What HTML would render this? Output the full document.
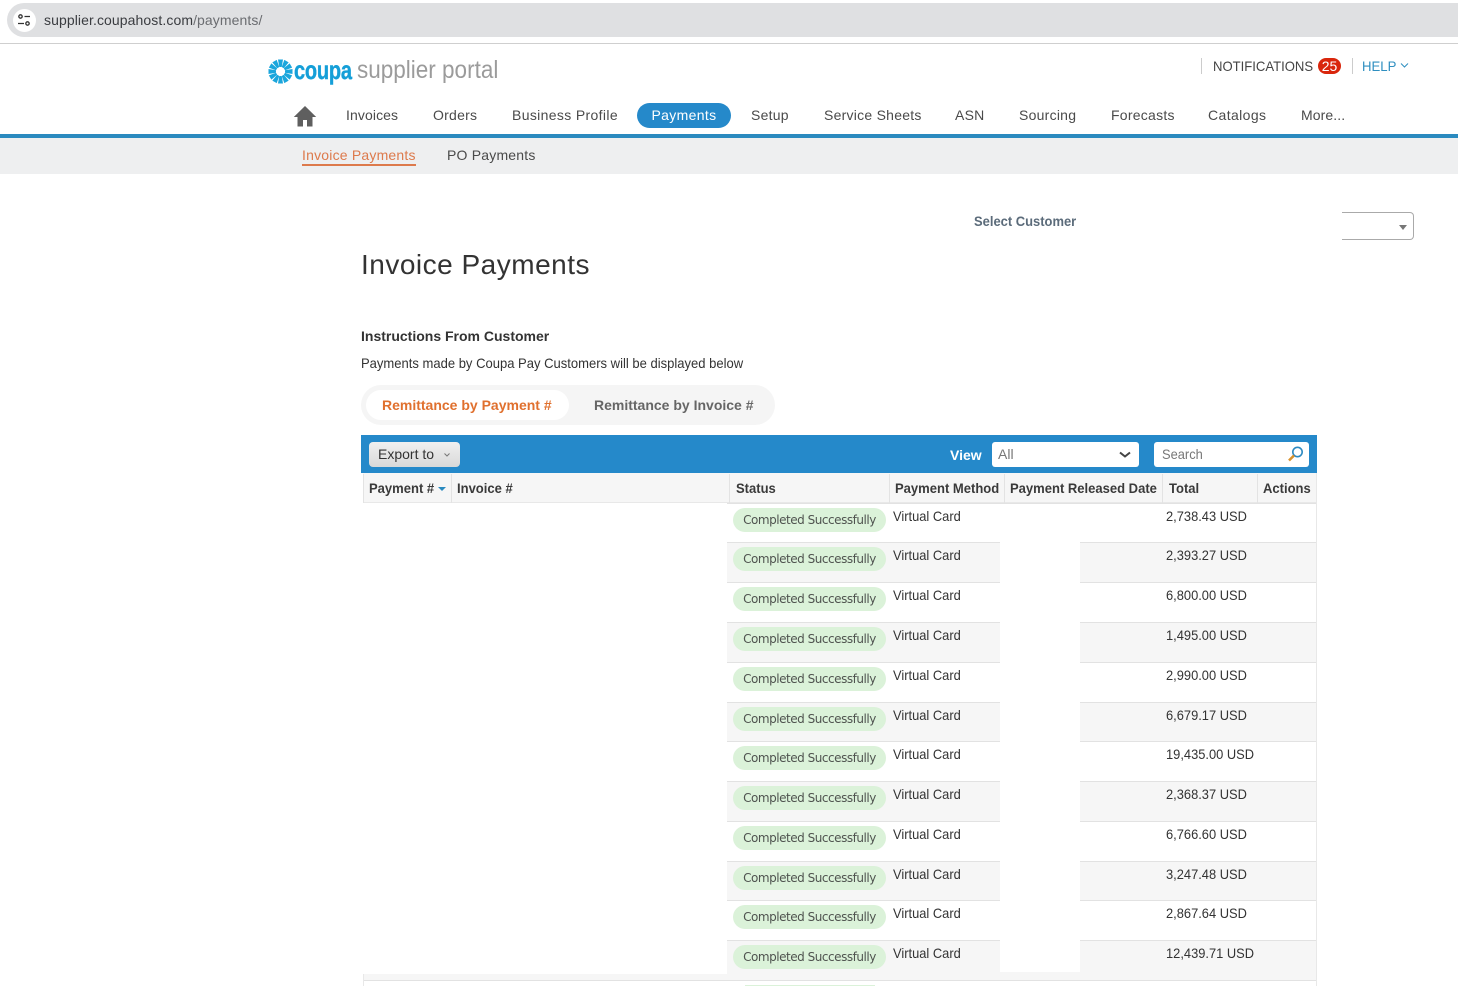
<!DOCTYPE html>
<html style="height:986px;overflow:hidden"><head><meta charset="utf-8"><style>
html,body{margin:0;padding:0;background:#fff}
body{width:1458px;height:986px;position:relative;overflow:hidden;font-family:"Liberation Sans",sans-serif;color:#333}
.a,.n,.r,.p,.v,.t,.h,.s{position:absolute;white-space:nowrap}
.n{top:107px;font-size:14px;line-height:16px;color:#4a4a4a;letter-spacing:.25px}
.r{left:727px;width:589px;border-top:1px solid #e2e2e2;box-sizing:border-box}
.e{background:#f6f6f6}
.p{left:733px;width:153px;height:24px;border-radius:12px;background:#dbf2d9;color:#4f534f;font-size:12px;line-height:24px;text-align:center;font-family:"DejaVu Sans",sans-serif;letter-spacing:-.47px}
.v{left:893px;font-size:14px;line-height:16px;color:#333;transform-origin:left;transform:scaleX(.92)}
.t{left:1166px;font-size:14px;line-height:16px;color:#333;transform-origin:left;transform:scaleX(.92)}
.h{top:480px;font-size:14px;line-height:16px;font-weight:bold;color:#3a3a3a;transform-origin:left;transform:scaleX(.93)}
.s{top:474px;width:1px;height:29px;background:#e3e3e3}
</style></head><body>
<div class="a" style="left:24px;top:3px;width:1434px;height:34px;background:#dfe0e2"></div>
<div class="a" style="left:7px;top:3px;width:40px;height:34px;background:#dfe0e2;border-radius:17px 0 0 17px"></div>
<div class="a" style="left:13px;top:9px;width:23px;height:23px;border-radius:50%;background:#fff"></div>
<svg class="a" style="left:17px;top:13px" width="15" height="15" viewBox="0 0 15 15" fill="none" stroke="#333" stroke-width="1.3"><circle cx="3.5" cy="3.5" r="1.7"/><path d="M7.5 3.5H13M1 10.5H7"/><circle cx="10.5" cy="10.5" r="1.7"/></svg>
<div class="a" style="left:44px;top:12px;font-size:14px;line-height:17px;color:#3a3c40;letter-spacing:.09px">supplier.coupahost.com<span style="color:#6a6c70">/payments/</span></div>
<div class="a" style="left:0;top:43px;width:1458px;height:1px;background:#cfcfcf"></div>

<svg class="a" style="left:268px;top:59px" width="25" height="25" viewBox="-12.5 -12.5 25 25" fill="#1ba6dc"><g><path d="M-2.5 -12 L2.5 -12 L1.2 -4.5 L-1.2 -4.5Z"/><path transform="rotate(30)" d="M-2.5 -12 L2.5 -12 L1.2 -4.5 L-1.2 -4.5Z"/><path transform="rotate(60)" d="M-2.5 -12 L2.5 -12 L1.2 -4.5 L-1.2 -4.5Z"/><path transform="rotate(90)" d="M-2.5 -12 L2.5 -12 L1.2 -4.5 L-1.2 -4.5Z"/><path transform="rotate(120)" d="M-2.5 -12 L2.5 -12 L1.2 -4.5 L-1.2 -4.5Z"/><path transform="rotate(150)" d="M-2.5 -12 L2.5 -12 L1.2 -4.5 L-1.2 -4.5Z"/><path transform="rotate(180)" d="M-2.5 -12 L2.5 -12 L1.2 -4.5 L-1.2 -4.5Z"/><path transform="rotate(210)" d="M-2.5 -12 L2.5 -12 L1.2 -4.5 L-1.2 -4.5Z"/><path transform="rotate(240)" d="M-2.5 -12 L2.5 -12 L1.2 -4.5 L-1.2 -4.5Z"/><path transform="rotate(270)" d="M-2.5 -12 L2.5 -12 L1.2 -4.5 L-1.2 -4.5Z"/><path transform="rotate(300)" d="M-2.5 -12 L2.5 -12 L1.2 -4.5 L-1.2 -4.5Z"/><path transform="rotate(330)" d="M-2.5 -12 L2.5 -12 L1.2 -4.5 L-1.2 -4.5Z"/></g></svg>
<div class="a" style="left:294px;top:55px;font-size:26px;line-height:30px;font-weight:bold;color:#159fd8;transform-origin:left;transform:scaleX(.77);letter-spacing:-.3px;-webkit-text-stroke:.4px #159fd8">coupa</div>
<div class="a" style="left:357px;top:55px;font-size:25px;line-height:30px;color:#9b9b9b;transform-origin:left;transform:scaleX(.9)">supplier portal</div>

<div class="a" style="left:1201px;top:58px;width:1px;height:16px;background:#ccc"></div>
<div class="a" style="left:1213px;top:58px;font-size:14px;line-height:16px;color:#444;transform-origin:left;transform:scaleX(.935)">NOTIFICATIONS</div>
<div class="a" style="left:1318px;top:58px;width:23px;height:16px;border-radius:8px;background:#d9260c;color:#fff;font-size:14px;line-height:16px;text-align:center">25</div>
<div class="a" style="left:1352px;top:58px;width:1px;height:16px;background:#ccc"></div>
<div class="a" style="left:1362px;top:58px;font-size:14px;line-height:16px;color:#2f8fc0;transform-origin:left;transform:scaleX(.94)">HELP</div>
<svg class="a" style="left:1400px;top:62px" width="9" height="7" viewBox="0 0 9 7" fill="none" stroke="#2f8fc0"><path d="M1 1.5L4.5 5L8 1.5"/></svg>

<svg class="a" style="left:293px;top:105px" width="24" height="22" viewBox="0 0 24 22" fill="#5f5f5f"><path d="M12 1L0.8 12H4.5V21.5H10V15H14V21.5H19.5V12H23.2Z"/></svg>
<div class="n" style="left:346px;letter-spacing:.1px">Invoices</div>
<div class="n" style="left:433px">Orders</div>
<div class="n" style="left:512px;letter-spacing:.35px">Business Profile</div>
<div class="a" style="left:637px;top:103px;width:94px;height:25px;border-radius:13px;background:#2589ca;color:#fff;font-size:14px;line-height:25px;text-align:center;letter-spacing:.35px">Payments</div>
<div class="n" style="left:751px">Setup</div>
<div class="n" style="left:824px">Service Sheets</div>
<div class="n" style="left:955px">ASN</div>
<div class="n" style="left:1019px">Sourcing</div>
<div class="n" style="left:1111px">Forecasts</div>
<div class="n" style="left:1208px;letter-spacing:.4px">Catalogs</div>
<div class="n" style="left:1301px;letter-spacing:.1px">More...</div>

<div class="a" style="left:0;top:134px;width:1458px;height:4px;background:#2a8abf"></div>
<div class="a" style="left:0;top:138px;width:1458px;height:36px;background:#eeeff0"></div>
<div class="a" style="left:302px;top:147px;font-size:14px;line-height:16px;color:#dd7a4c;letter-spacing:.2px;border-bottom:2px solid #dd7a4c;padding-bottom:1px">Invoice Payments</div>
<div class="a" style="left:447px;top:147px;font-size:14px;line-height:16px;color:#4a4a4a;letter-spacing:.2px">PO Payments</div>

<div class="a" style="left:974px;top:213px;font-size:14px;line-height:16px;font-weight:bold;color:#5b6b7a;transform-origin:left;transform:scaleX(.925)">Select Customer</div>
<div class="a" style="left:1342px;top:212px;width:71px;height:26px;border:1px solid #aaa;border-left:0;border-radius:0 4px 4px 0"></div>
<div class="a" style="left:1399px;top:225px;width:0;height:0;border-left:4px solid transparent;border-right:4px solid transparent;border-top:5px solid #777"></div>

<div class="a" style="left:361px;top:247px;font-size:28px;line-height:36px;color:#333;letter-spacing:.5px">Invoice Payments</div>
<div class="a" style="left:361px;top:328px;font-size:14px;line-height:16px;font-weight:bold;color:#333">Instructions From Customer</div>
<div class="a" style="left:361px;top:355px;font-size:14px;line-height:16px;color:#333;transform-origin:left;transform:scaleX(.93)">Payments made by Coupa Pay Customers will be displayed below</div>

<div class="a" style="left:361px;top:385px;width:414px;height:40px;border-radius:20px;background:#f5f5f5"></div>
<div class="a" style="left:366px;top:390px;width:203px;height:30px;border-radius:15px;background:#fff"></div>
<div class="a" style="left:382px;top:397px;font-size:14px;line-height:16px;font-weight:bold;color:#e0702e">Remittance by Payment #</div>
<div class="a" style="left:594px;top:397px;font-size:14px;line-height:16px;font-weight:bold;color:#666">Remittance by Invoice #</div>

<div class="a" style="left:361px;top:435px;width:956px;height:38px;background:#2589ca"></div>
<div class="a" style="left:369px;top:442px;width:91px;height:25px;border-radius:4px;background:linear-gradient(#f0f0f0,#d9d9d9)"></div>
<div class="a" style="left:378px;top:446px;font-size:14px;line-height:16px;color:#333">Export to</div>
<svg class="a" style="left:443px;top:452px" width="8" height="6" viewBox="0 0 8 6" fill="none" stroke="#777"><path d="M1.5 1.5L4 4L6.5 1.5"/></svg>
<div class="a" style="left:950px;top:447px;font-size:14px;line-height:16px;font-weight:bold;color:#fff">View</div>
<div class="a" style="left:992px;top:442px;width:147px;height:25px;border-radius:3px;background:#fff"></div>
<div class="a" style="left:998px;top:446px;font-size:14px;line-height:16px;color:#777">All</div>
<svg class="a" style="left:1119px;top:451px" width="12" height="8" viewBox="0 0 12 8" fill="none" stroke="#444" stroke-width="2"><path d="M1 1.5L6 5.5L11 1.5"/></svg>
<div class="a" style="left:1154px;top:442px;width:155px;height:25px;border-radius:3px;background:#fff"></div>
<div class="a" style="left:1162px;top:446px;font-size:14px;line-height:16px;color:#777;transform-origin:left;transform:scaleX(.92)">Search</div>
<svg class="a" style="left:1287px;top:445px" width="18" height="18" viewBox="0 0 18 18" fill="none"><circle cx="10.5" cy="7" r="4.7" stroke="#2d8ac2" stroke-width="1.6"/><path d="M7 10.5L2 15.5" stroke="#d9922e" stroke-width="2.6"/></svg>

<div class="a" style="left:363px;top:473px;width:953px;height:30px;background:#f6f6f6;border-bottom:1px solid #e8e8e8;box-sizing:border-box"></div>
<div class="s" style="left:363px"></div><div class="s" style="left:451px"></div><div class="s" style="left:729px"></div><div class="s" style="left:889px"></div><div class="s" style="left:1004px"></div><div class="s" style="left:1162px"></div><div class="s" style="left:1257px"></div>
<div class="h" style="left:369px">Payment #</div>
<div class="a" style="left:438px;top:487px;width:0;height:0;border-left:4px solid transparent;border-right:4px solid transparent;border-top:4px solid #2a8abf"></div>
<div class="h" style="left:457px">Invoice #</div>
<div class="h" style="left:736px">Status</div>
<div class="h" style="left:895px">Payment Method</div>
<div class="h" style="left:1010px">Payment Released Date</div>
<div class="h" style="left:1169px">Total</div>
<div class="h" style="left:1263px">Actions</div>

<div class="r" style="top:503px;height:39px"></div>
<div class="r e" style="top:542px;height:40px"></div>
<div class="r" style="top:582px;height:40px"></div>
<div class="r e" style="top:622px;height:40px"></div>
<div class="r" style="top:662px;height:40px"></div>
<div class="r e" style="top:702px;height:39px"></div>
<div class="r" style="top:741px;height:40px"></div>
<div class="r e" style="top:781px;height:40px"></div>
<div class="r" style="top:821px;height:40px"></div>
<div class="r e" style="top:861px;height:39px"></div>
<div class="r" style="top:900px;height:40px"></div>
<div class="r e" style="top:940px;height:34px"></div>
<div class="a" style="left:363px;top:974px;width:953px;height:6px;background:#f6f6f6"></div>
<div class="a" style="left:363px;top:980px;width:953px;height:1px;background:#e2e2e2"></div>
<div class="a" style="left:1316px;top:473px;width:1px;height:513px;background:#e8e8e8"></div>
<div class="a" style="left:363px;top:974px;width:1px;height:12px;background:#e8e8e8"></div>
<div class="a" style="left:1000px;top:504px;width:80px;height:468px;background:#fff"></div>

<div class="p" style="top:508px">Completed Successfully</div><div class="v" style="top:508px">Virtual Card</div><div class="t" style="top:508px">2,738.43 USD</div>
<div class="p" style="top:547px">Completed Successfully</div><div class="v" style="top:547px">Virtual Card</div><div class="t" style="top:547px">2,393.27 USD</div>
<div class="p" style="top:587px">Completed Successfully</div><div class="v" style="top:587px">Virtual Card</div><div class="t" style="top:587px">6,800.00 USD</div>
<div class="p" style="top:627px">Completed Successfully</div><div class="v" style="top:627px">Virtual Card</div><div class="t" style="top:627px">1,495.00 USD</div>
<div class="p" style="top:667px">Completed Successfully</div><div class="v" style="top:667px">Virtual Card</div><div class="t" style="top:667px">2,990.00 USD</div>
<div class="p" style="top:707px">Completed Successfully</div><div class="v" style="top:707px">Virtual Card</div><div class="t" style="top:707px">6,679.17 USD</div>
<div class="p" style="top:746px">Completed Successfully</div><div class="v" style="top:746px">Virtual Card</div><div class="t" style="top:746px">19,435.00 USD</div>
<div class="p" style="top:786px">Completed Successfully</div><div class="v" style="top:786px">Virtual Card</div><div class="t" style="top:786px">2,368.37 USD</div>
<div class="p" style="top:826px">Completed Successfully</div><div class="v" style="top:826px">Virtual Card</div><div class="t" style="top:826px">6,766.60 USD</div>
<div class="p" style="top:866px">Completed Successfully</div><div class="v" style="top:866px">Virtual Card</div><div class="t" style="top:866px">3,247.48 USD</div>
<div class="p" style="top:905px">Completed Successfully</div><div class="v" style="top:905px">Virtual Card</div><div class="t" style="top:905px">2,867.64 USD</div>
<div class="p" style="top:945px">Completed Successfully</div><div class="v" style="top:945px">Virtual Card</div><div class="t" style="top:945px">12,439.71 USD</div>
<div class="a" style="left:745px;top:985px;width:130px;height:1px;background:#dbf2d9"></div>
</body></html>
